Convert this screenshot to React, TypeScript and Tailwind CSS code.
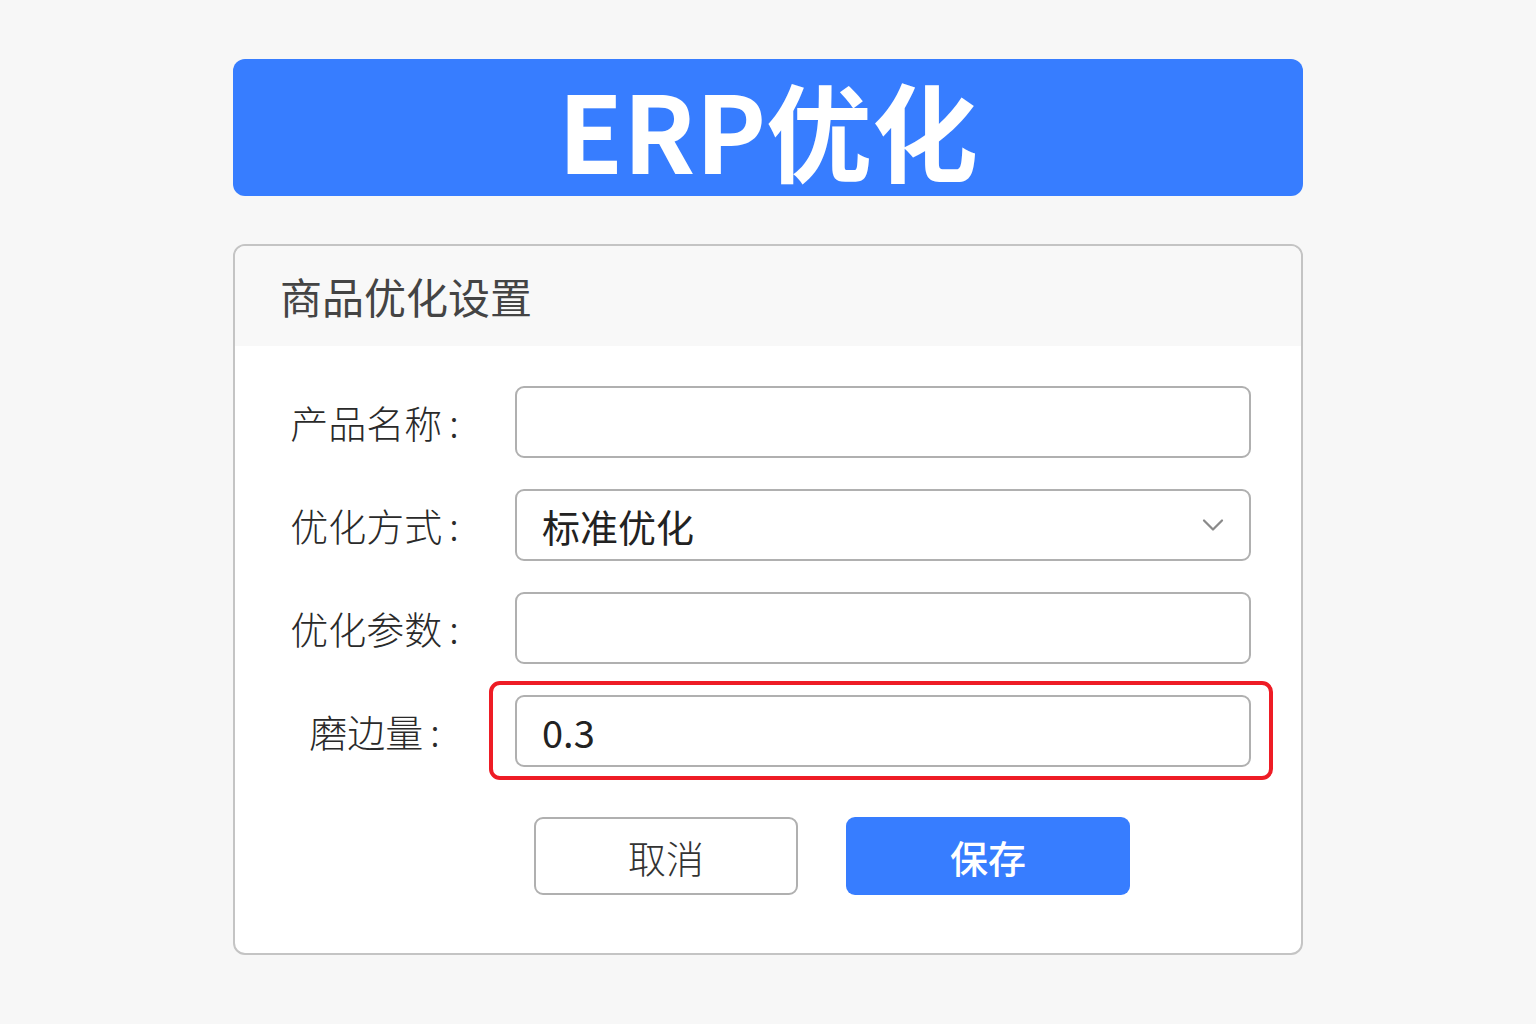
import { ChevronDown } from 'lucide-react';

const font = { fontFamily: '"Noto Sans CJK SC", "Noto Sans", sans-serif' };

function Row({ label, children }: { label: string; children: React.ReactNode }) {
  return (
    <div className="flex items-center">
      <div className="w-[244px] shrink-0 pl-[35px] text-center text-[38px] font-light leading-none text-[#2a2a2a]">
        {label}
        <span className="ml-[7px]">:</span>
      </div>
      <div className="relative ml-[36px] w-[736px]">{children}</div>
    </div>
  );
}

function Field({ value }: { value?: string }) {
  return (
    <div className="flex h-[72px] items-center rounded-[9px] border-2 border-[#b0b0b0] bg-white px-[25px] text-[38px] text-[#222]">
      {value}
    </div>
  );
}

export default function App() {
  return (
    <div className="min-h-[1024px] w-full bg-[#f7f7f7] pt-[59px]" style={font}>
      <div className="mx-auto w-[1070px]">
        <div className="flex h-[137px] items-center justify-center rounded-[12px] bg-[#377dff]">
          <h1 className="text-[106px] font-bold leading-none text-white">ERP优化</h1>
        </div>

        <div className="mt-[48px] overflow-hidden rounded-[12px] border-2 border-[#c4c4c4] bg-white">
          <div className="flex h-[100px] items-center bg-[#f8f8f8] px-[45px]">
            <h2 className="text-[42px] font-normal leading-none text-[#444]">商品优化设置</h2>
          </div>

          <div className="flex flex-col gap-[31px] pb-[58px] pt-[40px]">
            <Row label="产品名称">
              <Field />
            </Row>
            <Row label="优化方式">
              <div className="flex h-[72px] items-center justify-between rounded-[9px] border-2 border-[#b0b0b0] bg-white pl-[25px] pr-[18px] text-[38px] text-[#222]">
                <span>标准优化</span>
                <ChevronDown className="h-[36px] w-[36px] text-[#8a8a8a]" strokeWidth={1.5} />
              </div>
            </Row>
            <Row label="优化参数">
              <Field />
            </Row>
            <Row label="磨边量">
              <Field value="0.3" />
              <span className="pointer-events-none absolute -bottom-[13px] -left-[26px] -right-[22px] -top-[14px] rounded-[11px] border-[4px] border-[#ee1c25]" />
            </Row>

            <div className="ml-[299px] mt-[19px] flex gap-[48px]">
              <button className="h-[78px] w-[264px] rounded-[9px] border-2 border-[#b0b0b0] bg-white text-[38px] font-light text-[#333]">
                取消
              </button>
              <button className="h-[78px] w-[284px] rounded-[9px] bg-[#377dff] text-[38px] font-medium text-white">
                保存
              </button>
            </div>
          </div>
        </div>
      </div>
    </div>
  );
}
